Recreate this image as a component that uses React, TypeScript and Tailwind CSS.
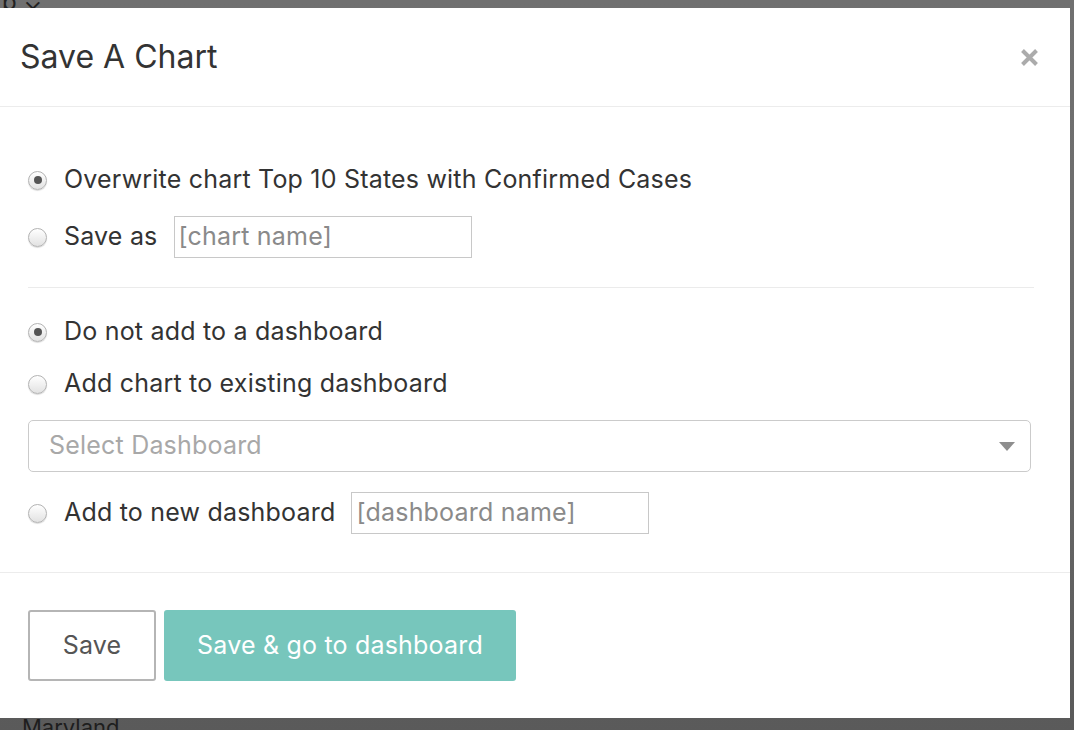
import React from "react";

function Radio({ checked }: { checked?: boolean }) {
  return (
    <span className="flex h-[19px] w-[19px] shrink-0 items-center justify-center rounded-full border border-[#b3b3b3] bg-gradient-to-b from-white to-[#e2e2e2] shadow-[0_1px_1px_rgba(0,0,0,0.15)]">
      {checked && <span className="h-[8px] w-[8px] rounded-full bg-[#555]" />}
    </span>
  );
}

function TextBox({ placeholder }: { placeholder: string }) {
  return (
    <div className="flex h-[42px] w-[298px] items-center border border-[#c8c8c8] px-[4px] text-[25px] text-[#8a8a8a]">
      {placeholder}
    </div>
  );
}

export default function App() {
  return (
    <div className="relative h-[730px] w-[1074px] overflow-hidden bg-gradient-to-b from-[#707070] via-[#6c6c6c] to-[#5a5a5a] font-['Inter','Liberation_Sans',sans-serif]">
      {/* page behind the backdrop */}
      <div className="absolute left-[2px] top-[-16px] text-[24px] text-[#222]">b ⌄</div>
      <div className="absolute left-[22px] top-[711px] text-[22px] text-[#1e1e1e]">Maryland</div>

      {/* Modal */}
      <div className="absolute left-0 top-[8px] flex h-[710px] w-[1070px] flex-col bg-white text-[#333]">
        {/* Header */}
        <div className="flex h-[99px] shrink-0 items-center justify-between border-b border-[#ececec] pl-[20px] pr-[31px]">
          <h2 className="text-[32px] font-normal leading-none">Save A Chart</h2>
          <svg width="19" height="19" viewBox="0 0 19 19">
            <path d="M2.5 2.5 L16.5 16.5 M16.5 2.5 L2.5 16.5" stroke="#ababab" strokeWidth="4" />
          </svg>
        </div>

        {/* Body */}
        <div className="flex flex-col px-[28px] pb-[38px] pt-[58px] text-[25px] tracking-[0.2px]">
          <label className="flex h-[30px] items-center gap-[17px]">
            <Radio checked />
            <span>Overwrite chart Top 10 States with Confirmed Cases</span>
          </label>
          <label className="mt-[21px] flex h-[42px] items-center">
            <Radio />
            <span className="ml-[17px] mr-[16px]">Save as</span>
            <TextBox placeholder="[chart name]" />
          </label>

          <hr className="mt-[29px] w-[1006px] border-t border-[#ebebeb]" />

          <label className="mt-[29px] flex h-[30px] items-center gap-[17px]">
            <Radio checked />
            <span>Do not add to a dashboard</span>
          </label>
          <label className="mt-[22px] flex h-[30px] items-center gap-[17px]">
            <Radio />
            <span>Add chart to existing dashboard</span>
          </label>

          <div className="mt-[21px] flex h-[52px] w-[1003px] items-center justify-between rounded-[5px] border border-[#cbcbcb] pl-[20px] pr-[15px]">
            <span className="text-[#a8a8a8]">Select Dashboard</span>
            <svg width="16" height="9" viewBox="0 0 16 9">
              <path d="M0 0 L16 0 L8 9 Z" fill="#8e8e8e" />
            </svg>
          </div>

          <label className="mt-[20px] flex h-[42px] items-center">
            <Radio />
            <span className="ml-[17px] mr-[16px]">Add to new dashboard</span>
            <TextBox placeholder="[dashboard name]" />
          </label>
        </div>

        {/* Footer */}
        <div className="flex flex-1 items-start gap-[8px] border-t border-[#ececec] px-[28px] pt-[37px] tracking-[0.2px]">
          <button className="h-[71px] w-[128px] rounded-[3px] border-2 border-[#b5b5b5] bg-white text-[25px] text-[#555]">
            Save
          </button>
          <button className="h-[71px] w-[352px] rounded-[3px] bg-[#77c6bc] text-[25px] text-white">
            Save &amp; go to dashboard
          </button>
        </div>
      </div>
    </div>
  );
}
